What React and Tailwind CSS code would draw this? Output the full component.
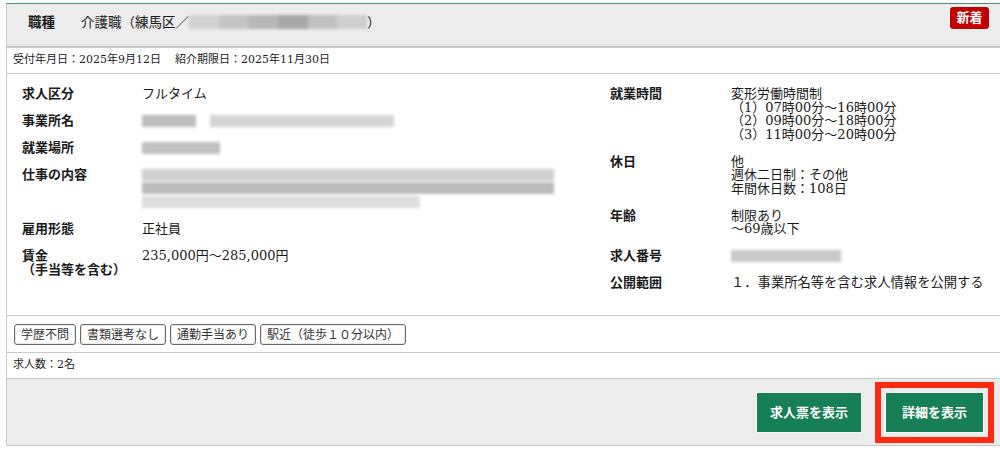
import React from "react";

const serif = { fontFamily: '"DejaVu Serif", "Noto Sans CJK JP", serif' };
const sans = { fontFamily: '"Noto Sans CJK JP", "Noto Sans", sans-serif' };

function Blur({ w, shade = "bg-[#c6c6c6]" }) {
  return (
    <span
      className={`inline-block h-[12px] align-middle blur-[1.5px] ${shade}`}
      style={{ width: w }}
    />
  );
}

function Row({ label, children, labelW = "w-[120px]" }) {
  return (
    <div className="flex">
      <div className={`${labelW} shrink-0 font-bold`}>{label}</div>
      <div className="flex-1">{children}</div>
    </div>
  );
}

export default function App() {
  return (
    <div className="w-[1000px] h-[452px] overflow-hidden bg-white text-[#1a1a1a]" style={serif}>
      <div className="ml-[6px] mt-[3px] border-t border-t-[#3d9a6c] border-l border-l-[#c8c8c8] border-b border-b-[#c8c8c8]">
        {/* header */}
        <div className="bg-[#ececec] h-[40px] flex items-start justify-between pl-[21px] pr-[11px]">
          <div className="flex items-center pt-[8px] text-[13.5px]">
            <span className="font-bold w-[53px]">職種</span>
            <span>介護職（練馬区／</span>
            <span className="inline-flex w-[178px] h-[14px] gap-0 blur-[1.5px]">
              <span className="flex-1 bg-[#d2d2d2]" />
              <span className="flex-1 bg-[#c4c4c4]" />
              <span className="flex-1 bg-[#b8b8b8]" />
              <span className="flex-1 bg-[#a8a8a8]" />
              <span className="flex-1 bg-[#c0c0c0]" />
              <span className="flex-1 bg-[#cfcfcf]" />
            </span>
            <span>）</span>
          </div>
          <div className="mt-[3px] bg-[#c30000] text-white text-[13px] font-bold rounded-[3px] w-[39px] h-[22px] flex items-center justify-center shadow-[0_0_0_1px_#f4f4f4]">
            新着
          </div>
        </div>
        <div className="h-[2px] bg-[#e3e3e3]" />
        <div className="h-[2px] bg-[#c9c9c9]" />

        {/* date row */}
        <div className="h-[26px] flex items-center pl-[6px] text-[11px] border-b border-b-[#c8c8c8]">
          <span>受付年月日：2025年9月12日</span>
          <span className="ml-[14px]">紹介期限日：2025年11月30日</span>
        </div>

        {/* main content */}
        <div className="h-[242px] flex pt-[13px] pl-[15px] text-[13px] leading-[13.5px] border-b border-b-[#c8c8c8]">
          <div className="w-[588px] shrink-0 flex flex-col gap-[13.5px]">
            <Row label="求人区分">フルタイム</Row>
            <Row label="事業所名">
              <div className="flex gap-[14px] h-[13.5px] items-center">
                <Blur w={54} shade="bg-[#bdbdbd]" />
                <Blur w={184} shade="bg-[#d4d4d4]" />
              </div>
            </Row>
            <Row label="就業場所">
              <div className="flex h-[13.5px] items-center">
                <Blur w={78} shade="bg-[#c0c0c0]" />
              </div>
            </Row>
            <Row label="仕事の内容">
              <div className="flex flex-col">
                <div className="h-[13.5px] flex items-center">
                  <Blur w={412} shade="bg-[#d0d0d0]" />
                </div>
                <div className="h-[13.5px] flex items-center">
                  <Blur w={412} shade="bg-[#bcbcbc]" />
                </div>
                <div className="h-[13.5px] flex items-center">
                  <Blur w={278} shade="bg-[#dedede]" />
                </div>
              </div>
            </Row>
            <Row label="雇用形態">正社員</Row>
            <Row
              label={
                <>
                  賃金
                  <br />
                  （手当等を含む）
                </>
              }
            >
              235,000円～285,000円
            </Row>
          </div>
          <div className="flex-1 flex flex-col gap-[13.5px]">
            <Row label="就業時間" labelW="w-[121px]">
              変形労働時間制
              <br />
              （1）07時00分～16時00分
              <br />
              （2）09時00分～18時00分
              <br />
              （3）11時00分～20時00分
            </Row>
            <Row label="休日" labelW="w-[121px]">
              他
              <br />
              週休二日制：その他
              <br />
              年間休日数：108日
            </Row>
            <Row label="年齢" labelW="w-[121px]">
              制限あり
              <br />
              ～69歳以下
            </Row>
            <Row label="求人番号" labelW="w-[121px]">
              <div className="flex h-[13.5px] items-center">
                <Blur w={110} shade="bg-[#c8c8c8]" />
              </div>
            </Row>
            <Row label="公開範囲" labelW="w-[121px]">
              <span className="text-[13.3px]">１．事業所名等を含む求人情報を公開する</span>
            </Row>
          </div>
        </div>

        {/* tags */}
        <div className="h-[37px] flex items-start pt-[8px] pl-[7px] gap-[4px] text-[12px] border-b border-b-[#c8c8c8]">
          {["学歴不問", "書類選考なし", "通勤手当あり", "駅近（徒歩１０分以内）"].map((t) => (
            <div
              key={t}
              className="h-[21px] px-[6px] flex items-center border border-[#6a6a6a] rounded-[3px] bg-white text-[#333] shadow-[inset_0_0_0_1px_#e8e8e8]"
            >
              {t}
            </div>
          ))}
        </div>

        {/* count */}
        <div className="h-[26px] flex items-center pl-[6px] text-[11px] border-b border-b-[#c8c8c8]">
          求人数：2名
        </div>

        {/* footer */}
        <div className="h-[66px] bg-[#ececec] flex items-center justify-end pr-[6px]" style={sans}>
          <button className="w-[106px] h-[41px] border border-[#f8f8f8] bg-[#177f56] text-white text-[13px] font-bold flex items-center justify-center">
            求人票を表示
          </button>
          <div className="ml-[13px] border-[6px] border-[#ff2a10] p-[4px]">
            <button className="w-[99px] h-[41px] border border-[#f8f8f8] bg-[#177f56] text-white text-[13px] font-bold flex items-center justify-center">
              詳細を表示
            </button>
          </div>
        </div>
      </div>
    </div>
  );
}
